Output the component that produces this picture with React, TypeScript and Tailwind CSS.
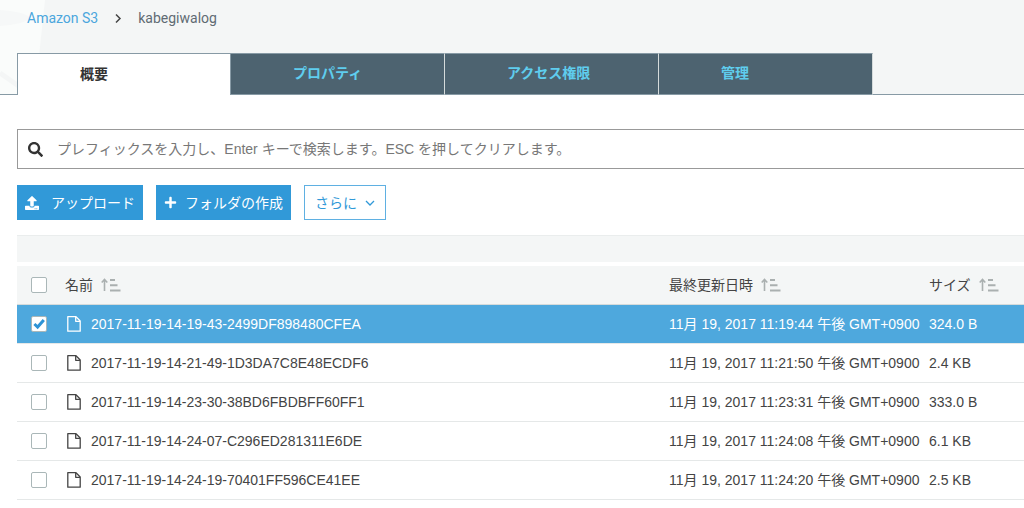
import { useState } from "react"
import { FaSearch, FaUpload, FaPlus } from "react-icons/fa"

type S3Object = {
  name: string
  modified: string
  size: string
}

const tabs = ["概要", "プロパティ", "アクセス権限", "管理"]

const objects: S3Object[] = [
  { name: "2017-11-19-14-19-43-2499DF898480CFEA", modified: "11月 19, 2017 11:19:44 午後 GMT+0900", size: "324.0 B" },
  { name: "2017-11-19-14-21-49-1D3DA7C8E48ECDF6", modified: "11月 19, 2017 11:21:50 午後 GMT+0900", size: "2.4 KB" },
  { name: "2017-11-19-14-23-30-38BD6FBDBFF60FF1", modified: "11月 19, 2017 11:23:31 午後 GMT+0900", size: "333.0 B" },
  { name: "2017-11-19-14-24-07-C296ED281311E6DE", modified: "11月 19, 2017 11:24:08 午後 GMT+0900", size: "6.1 KB" },
  { name: "2017-11-19-14-24-19-70401FF596CE41EE", modified: "11月 19, 2017 11:24:20 午後 GMT+0900", size: "2.5 KB" },
]

function SortIcon() {
  return (
    <svg width="20" height="14" viewBox="0 0 20 14" fill="none" stroke="#aab0b0" strokeWidth="1.6" aria-hidden="true">
      <path d="M3.5 13V1.5M0.7 4.5L3.5 1.5L6.3 4.5" />
      <path d="M9 2H14M9 7.2H16.5M9 12.4H19.5" strokeWidth="2" />
    </svg>
  )
}

function FileIcon() {
  return (
    <svg width="14" height="16" viewBox="0 0 14 16" fill="none" stroke="currentColor" strokeWidth="1.3" strokeLinejoin="round" aria-hidden="true">
      <path d="M1.2 0.7H9L13.2 5V15.2H0.8V0.7Z" />
      <path d="M8.7 0.9V5.3H13" />
    </svg>
  )
}

function Checkbox({ label, checked, onChange }: { label: string; checked: boolean; onChange: () => void }) {
  return (
    <label className="relative block w-4 h-4">
      <input
        type="checkbox"
        checked={checked}
        onChange={onChange}
        aria-label={label}
        className="block w-4 h-4 appearance-none rounded-xs border border-[#aab7b8] bg-white cursor-pointer"
      />
      {checked && (
        <svg viewBox="0 0 16 16" fill="none" stroke="#2e93d5" strokeWidth="3" className="absolute inset-0 pointer-events-none" aria-hidden="true">
          <path d="M3.4 8L6.6 11L12.8 4" />
        </svg>
      )}
    </label>
  )
}

function SortHeader({ title }: { title: string }) {
  return (
    <button type="button" className="flex items-center gap-2 font-normal">
      {title}
      <SortIcon />
    </button>
  )
}

export default function App() {
  const [activeTab, setActiveTab] = useState(0)
  const [query, setQuery] = useState("")
  const [selected, setSelected] = useState<string[]>([objects[0].name])

  const allSelected = selected.length === objects.length

  const toggle = (name: string) => {
    setSelected((prev) => (prev.includes(name) ? prev.filter((n) => n !== name) : [...prev, name]))
  }

  const toggleAll = () => {
    setSelected(allSelected ? [] : objects.map((o) => o.name))
  }

  return (
    <div className="min-h-screen bg-white text-sm text-[#444] overflow-x-hidden font-['Liberation_Sans','Noto_Sans_CJK_JP',sans-serif]">
      <header className="relative bg-[#f4f6f6] border-b border-[#879aa5]">
        {/* faint bucket drawing behind the breadcrumb */}
        <svg width="46" height="94" viewBox="0 0 46 94" className="absolute left-0 top-0" aria-hidden="true">
          <path d="M0 0H45L39 56L34 94H0Z" fill="#fafcfb" />
          <path d="M0 10C14 11 26 13 30 18C28 22 14 25 0 26Z" fill="#f6f8f8" />
          <path d="M0 73L20 87" stroke="#f4f6f6" strokeWidth="5" />
        </svg>

        <nav aria-label="Breadcrumb" className="relative flex items-center gap-4 h-9 px-[27px] font-[Roboto,sans-serif]">
          <a href="#" className="text-[#4ba6dd]">Amazon S3</a>
          <svg width="8" height="10" viewBox="0 0 8 10" fill="none" stroke="#444" strokeWidth="1.5" aria-hidden="true">
            <path d="M2 1.5L6 5.5L2 9.5" />
          </svg>
          <span className="text-[#5f6b73]">kabegiwalog</span>
        </nav>

        <div role="tablist" className="relative flex pl-[17px] pt-[17px] -mb-px">
          {tabs.map((tab, i) => (
            <button
              key={tab}
              type="button"
              role="tab"
              aria-selected={i === activeTab}
              onClick={() => setActiveTab(i)}
              className={`w-[214px] h-[42px] pl-[62px] pb-0.5 text-left text-sm font-bold border-t border-r ${
                i === activeTab
                  ? "bg-white text-[#333] border-l border-[#879aa5]"
                  : "bg-[#4d6370] text-[#5fcdee] border-t-[#879aa5] border-r-[#d5dbdb] border-b border-b-[#879aa5]"
              }`}
            >
              {tab}
            </button>
          ))}
        </div>
      </header>

      <main className="pl-[17px] pt-[34px]">
        <label className="flex items-center gap-3.5 h-10 pl-2.5 border border-r-0 border-[#999]">
          <FaSearch size={15} className="text-[#333]" />
          <input
            type="text"
            value={query}
            onChange={(e) => setQuery(e.target.value)}
            placeholder="プレフィックスを入力し、Enter キーで検索します。ESC を押してクリアします。"
            className="flex-1 min-w-0 outline-none placeholder:text-[#777]"
          />
        </label>

        <div className="flex gap-[13px] mt-4">
          <button type="button" className="flex items-center gap-3 h-[35px] px-2 bg-[#3199d8] text-white">
            <FaUpload size={14} />
            アップロード
          </button>
          <button type="button" className="flex items-center gap-2 h-[35px] px-2 bg-[#3199d8] text-white">
            <FaPlus size={13} />
            フォルダの作成
          </button>
          <button type="button" className="flex items-center gap-2 h-[35px] px-2.5 border border-[#5fb0e2] text-[#3199d8]">
            さらに
            <svg width="10" height="6" viewBox="0 0 10 6" fill="none" stroke="currentColor" strokeWidth="1.3" aria-hidden="true">
              <path d="M1 1L5 5L9 1" />
            </svg>
          </button>
        </div>

        <div className="mt-[15px] h-[27px] bg-[#f4f6f6] border-t border-[#eaeded]" />

        <table className="w-full mt-1 table-fixed border-separate border-spacing-0 text-left">
          <thead>
            <tr className="h-[39px] bg-[#f4f6f6]">
              <th className="w-12 pl-3.5 border-b border-[#d5dbdb]">
                <Checkbox label="すべて選択" checked={allSelected} onChange={toggleAll} />
              </th>
              <th className="border-b border-[#d5dbdb]">
                <SortHeader title="名前" />
              </th>
              <th className="w-[260px] border-b border-[#d5dbdb]">
                <SortHeader title="最終更新日時" />
              </th>
              <th className="w-[95px] border-b border-[#d5dbdb]">
                <SortHeader title="サイズ" />
              </th>
            </tr>
          </thead>
          <tbody>
            {objects.map((obj) => {
              const isSelected = selected.includes(obj.name)
              return (
                <tr key={obj.name} className={`h-[39px] ${isSelected ? "bg-[#4ea8dd] text-white" : "bg-white"}`}>
                  <td className="pl-3.5 border-b border-[#e5e8e8]">
                    <Checkbox label={obj.name} checked={isSelected} onChange={() => toggle(obj.name)} />
                  </td>
                  <td className="border-b border-[#e5e8e8]">
                    <a href="#" className="flex items-center gap-2.5 pl-0.5">
                      <FileIcon />
                      {obj.name}
                    </a>
                  </td>
                  <td className="whitespace-nowrap border-b border-[#e5e8e8]">{obj.modified}</td>
                  <td className="whitespace-nowrap border-b border-[#e5e8e8]">{obj.size}</td>
                </tr>
              )
            })}
          </tbody>
        </table>
      </main>
    </div>
  )
}
